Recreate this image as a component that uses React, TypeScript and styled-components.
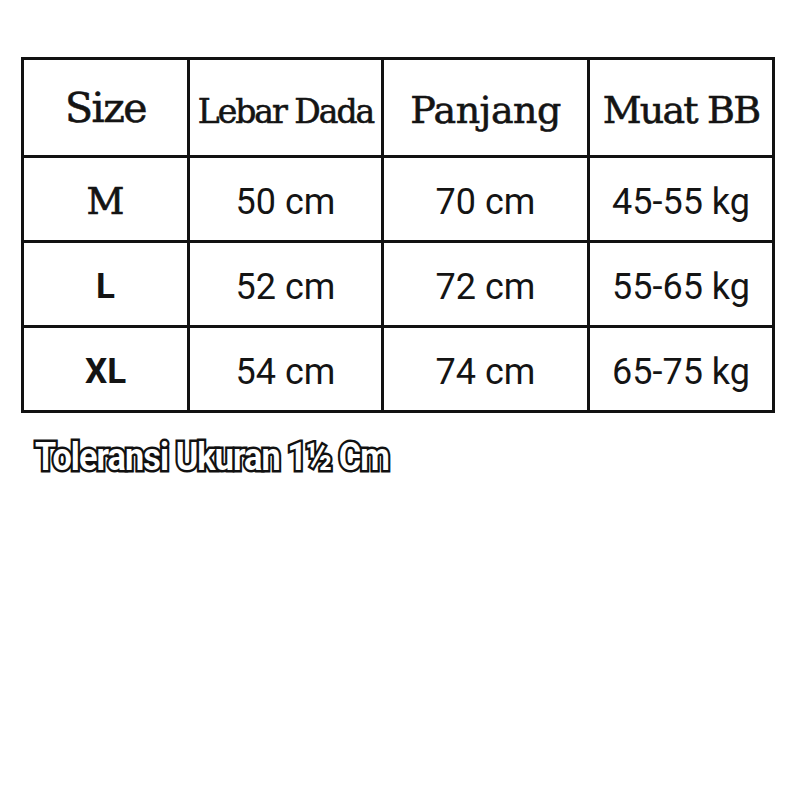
import styled, { createGlobalStyle } from "styled-components";

const GlobalStyle = createGlobalStyle`
    html, body {
        margin: 0;
        padding: 0;
        background: #ffffff;
    }
    body {
        font-family: Roboto, "Liberation Sans", sans-serif;
        color: #111111;
    }
`;

type Row = {
    size: string;
    serif?: boolean;
    dada: string;
    panjang: string;
    bb: string;
};

const rows: Row[] = [
    { size: "M", serif: true, dada: "50 cm", panjang: "70 cm", bb: "45-55 kg" },
    { size: "L", dada: "52 cm", panjang: "72 cm", bb: "55-65 kg" },
    { size: "XL", dada: "54 cm", panjang: "74 cm", bb: "65-75 kg" },
];

export default function App() {
    return (
        <Page>
            <GlobalStyle />
            <Table>
                <HeadCell $size={41} $shift={0} $spacing={-1.5}>
                    Size
                </HeadCell>
                <HeadCell $size={33} $shift={8} $spacing={-2}>
                    Lebar Dada
                </HeadCell>
                <HeadCell $size={38} $shift={4} $spacing={-0.5}>
                    Panjang
                </HeadCell>
                <HeadCell $size={38} $shift={4} $spacing={-1.8}>
                    Muat BB
                </HeadCell>

                {rows.map((r) => (
                    <>
                        <SizeCell key={r.size} $serif={r.serif}>
                            {r.size}
                        </SizeCell>
                        <Cell key={r.size + "d"}>{r.dada}</Cell>
                        <Cell key={r.size + "p"}>{r.panjang}</Cell>
                        <Cell key={r.size + "b"}>{r.bb}</Cell>
                    </>
                ))}
            </Table>
            <Note>Toleransi Ukuran 1½ Cm</Note>
        </Page>
    );
}

const Page = styled.main`
    display: flex;
    flex-direction: column;
    align-items: flex-start;
    padding: 57px 0 0 21px;
    min-height: 100vh;
    box-sizing: border-box;
`;

const Table = styled.div`
    display: grid;
    grid-template-columns: 163px 191px 203px 182px;
    grid-template-rows: 95px 82px 82px 82px;
    gap: 3px;
    padding: 3px;
    background: #111111;
`;

const BaseCell = styled.div`
    display: flex;
    align-items: center;
    justify-content: center;
    background: #ffffff;
    white-space: nowrap;
`;

const HeadCell = styled(BaseCell)<{
    $size: number;
    $shift: number;
    $spacing: number;
}>`
    font-family: "DejaVu Serif", "Liberation Serif", serif;
    font-size: ${(p) => p.$size}px;
    letter-spacing: ${(p) => p.$spacing}px;
    padding-top: ${(p) => p.$shift}px;
    color: #141414;
    -webkit-text-stroke: 0.6px #141414;
`;

const Cell = styled(BaseCell)`
    font-family: Roboto, "Liberation Sans", sans-serif;
    font-size: 36px;
    padding-top: 5px;
    color: #141414;
`;

const SizeCell = styled(BaseCell)<{ $serif?: boolean }>`
    font-family: ${(p) =>
        p.$serif
            ? `"DejaVu Serif", "Liberation Serif", serif`
            : `Roboto, "Liberation Sans", sans-serif`};
    font-weight: ${(p) => (p.$serif ? 400 : 700)};
    font-size: ${(p) => (p.$serif ? 37 : 35)}px;
    -webkit-text-stroke: ${(p) => (p.$serif ? "0.7px #141414" : "0")};
    padding-top: 5px;
    color: #141414;
`;

const Note = styled.div`
    margin: 27px 0 0 14px;
    font-family: Roboto, "Liberation Sans", sans-serif;
    font-weight: 700;
    font-size: 38px;
    line-height: 34px;
    letter-spacing: -1px;
    color: #ffffff;
    -webkit-text-stroke: 5px #111111;
    paint-order: stroke fill;
    transform: scaleX(0.9);
    transform-origin: left center;
`;
